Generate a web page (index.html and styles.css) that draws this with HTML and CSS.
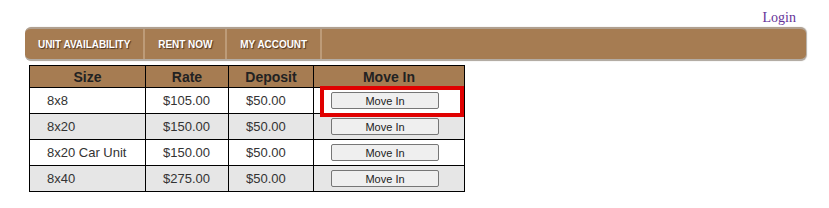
FILE: index.html
```html
<!DOCTYPE html>
<html lang="en">
<head>
  <meta charset="UTF-8">
  <title>Unit Availability</title>
  <link rel="stylesheet" href="styles.css">
</head>
<body>
  <div class="page">
    <div class="topbar">
      <a href="#" class="login">Login</a>
    </div>

    <!-- Main navigation -->
    <div class="nav">
      <a href="#" class="nav-item">Unit Availability</a>
      <a href="#" class="nav-item">Rent Now</a>
      <a href="#" class="nav-item">My Account</a>
    </div>

    <table class="units">
      <thead>
        <tr>
          <th class="col-size">Size</th>
          <th class="col-rate">Rate</th>
          <th class="col-deposit">Deposit</th>
          <th class="col-move">Move In</th>
        </tr>
      </thead>
      <tbody>
        <tr>
          <td>8x8</td>
          <td>$105.00</td>
          <td>$50.00</td>
          <td class="move-cell"><button type="button">Move In</button><span class="highlight"></span></td>
        </tr>
        <tr class="alt">
          <td>8x20</td>
          <td>$150.00</td>
          <td>$50.00</td>
          <td class="move-cell"><button type="button">Move In</button></td>
        </tr>
        <tr>
          <td>8x20 Car Unit</td>
          <td>$150.00</td>
          <td>$50.00</td>
          <td class="move-cell"><button type="button">Move In</button></td>
        </tr>
        <tr class="alt">
          <td>8x40</td>
          <td>$275.00</td>
          <td>$50.00</td>
          <td class="move-cell"><button type="button">Move In</button></td>
        </tr>
      </tbody>
    </table>
  </div>
</body>
</html>
```

FILE: styles.css
```css
body {
  margin: 0;
  background: #fff;
}

.page {
  padding: 0 23px 0 25px;
}

.topbar {
  height: 27px;
  text-align: right;
  padding-right: 10px;
  box-sizing: border-box;
  padding-top: 8px;
}

.login {
  font-family: "Liberation Serif", serif;
  font-size: 14px;
  color: #663399;
  text-decoration: none;
}

.nav {
  display: flex;
  height: 34px;
  background-color: #a67c52;
  border-top: 2px solid #b0a090;
  border-bottom: 2px solid #b3aca4;
  border-radius: 6px;
  box-sizing: border-box;
  box-shadow: 1px 0 1px #b3aca4;
}

.nav-item {
  display: flex;
  align-items: center;
  padding: 0 13px;
  border-right: 2px solid #bd9b78;
  font-family: "Liberation Sans", Arial, sans-serif;
  font-size: 10px;
  font-weight: bold;
  letter-spacing: -0.05px;
  text-transform: uppercase;
  color: #fff;
  text-decoration: none;
  text-shadow: 1px 1px 1px #4a3420;
}

.units {
  margin: 4px 0 0 4px;
  border-collapse: collapse;
  border: 1px solid #000;
  font-family: "Liberation Sans", Arial, sans-serif;
  font-size: 13px;
  color: #333;
}

.units th,
.units td {
  border: 1px solid #000;
  padding: 0;
}

.units th {
  height: 21px;
  background-color: #a67c52;
  font-size: 14px;
  color: #222;
  text-align: center;
}

.units td {
  height: 25px;
  padding-left: 17px;
  text-align: left;
}

.col-size { width: 115px; }
.col-rate { width: 82px; }
.col-deposit { width: 84px; }
.col-move { width: 150px; }

.units tr.alt td {
  background-color: #e6e6e6;
}

.move-cell {
  position: relative;
}

.move-cell button {
  width: 108px;
  height: 17px;
  padding: 0;
  font-family: "Liberation Sans", Arial, sans-serif;
  font-size: 11px;
  color: #222;
  background-color: #efefef;
  border: 1px solid #767676;
  border-radius: 2px;
  vertical-align: middle;
}

.highlight {
  position: absolute;
  z-index: 1;
  left: 6px;
  right: 0;
  top: -2px;
  bottom: -4px;
  border: 4px solid #e00000;
}
```
